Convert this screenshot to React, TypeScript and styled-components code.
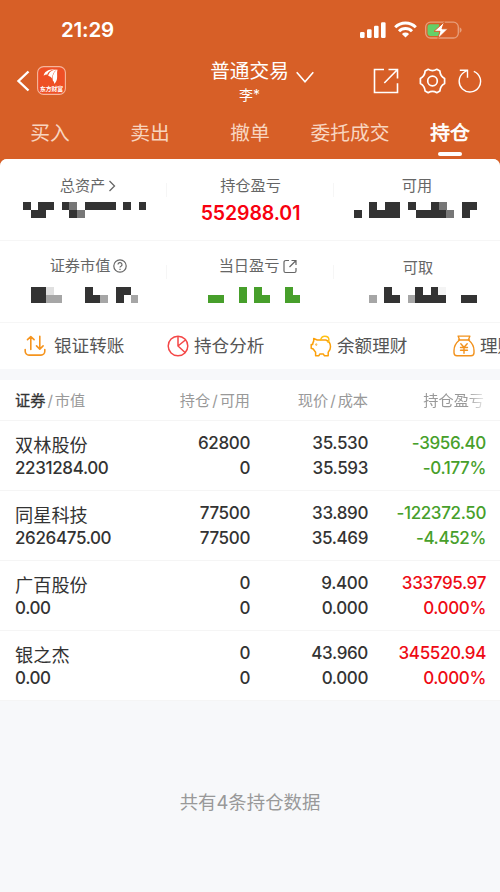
import React from "react";
import styled, { createGlobalStyle } from "styled-components";

const GlobalStyle = createGlobalStyle`
  * { box-sizing: border-box; }
  body { margin: 0; background: #f7f8fa; }
`;

const CELL = 7.7;
const INK: Record<string, string> = {
  "#": "#333333",
  m: "#777777",
  g: "#a6a6a6",
  l: "#e0e0e0",
  f: "#f4f4f4",
  G: "#479f2b",
};

const Screen = styled.div`
  width: 500px;
  height: 892px;
  overflow: hidden;
  display: flex;
  flex-direction: column;
  background: #d75f27;
  color: #333;
  font-family: Inter, "Noto Sans CJK SC", sans-serif;
`;

const StatusBar = styled.div`
  height: 56px;
  display: flex;
  justify-content: space-between;
  padding: 16px 38px 0 61px;
  color: #fff;
`;

const Clock = styled.span`
  font-size: 20.5px;
  line-height: 28px;
  font-weight: 600;
  letter-spacing: -0.2px;
`;

const StatusIcons = styled.div`
  display: flex;
  align-items: center;
  height: 27px;
  gap: 8px;
`;

const NavBar = styled.div`
  height: 52px;
  display: grid;
  grid-template-columns: 200px 120px 180px;
  color: #fff;
`;

const NavLeft = styled.div`
  display: flex;
  align-items: center;
  height: 49px;
  padding-left: 16px;
  gap: 7px;
`;

const NavTitle = styled.div`
  display: flex;
  padding: 2px 0 0 10px;
  gap: 7px;
`;

const TitleText = styled.div`
  width: 79px;
  text-align: center;
  white-space: nowrap;
`;

const Account = styled.div`
  font-size: 19.7px;
  line-height: 27px;
`;

const Owner = styled.div`
  font-size: 14px;
  line-height: 20px;
`;

const Chevron = styled.svg`
  margin-top: 13px;
`;

const NavRight = styled.div`
  display: flex;
  align-items: center;
  height: 49px;
  padding-left: 53px;
`;

const ToolIcon = styled.svg<{ $gap?: number }>`
  margin-left: ${(p) => p.$gap ?? 0}px;
  flex: none;
`;

const Tabs = styled.div`
  height: 51px;
  display: grid;
  grid-template-columns: repeat(5, 1fr);
`;

const Tab = styled.div<{ $active?: boolean }>`
  display: flex;
  flex-direction: column;
  align-items: center;
  justify-content: space-between;
  padding: 11px 0 3px;
  font-size: 19.8px;
  line-height: 29px;
  color: ${(p) => (p.$active ? "#fff" : "#f8d5c0")};
  -webkit-text-stroke: ${(p) => (p.$active ? "0.7px #fff" : "0")};
`;

const TabMark = styled.span`
  width: 24px;
  height: 4px;
  border-radius: 2px;
  background: #fff;
`;

const Sheet = styled.div`
  flex: 1;
  border-radius: 7px 7px 0 0;
  background: #f7f8fa;
  overflow: hidden;
`;

const Summary = styled.div`
  background: #fff;
  display: grid;
  grid-template-columns: 167px 167px 166px;
  grid-template-rows: 82px 82px;
`;

const Metric = styled.div<{ $top?: number }>`
  display: flex;
  flex-direction: column;
  border-bottom: 1px solid #f6f6f6;
  padding-top: ${(p) => p.$top ?? 16}px;
  background: linear-gradient(#f6f6f6, #f6f6f6) right 24px / 1px 14px no-repeat;

  &:nth-child(3n) {
    background: none;
  }
`;

const MetricLabel = styled.div<{ $shift?: number }>`
  display: flex;
  justify-content: center;
  align-items: center;
  gap: 3px;
  font-size: 15.2px;
  line-height: 22px;
  height: 22px;
  color: #666;
  padding-left: ${(p) => p.$shift ?? 0}px;
`;

const MetricValue = styled.div`
  text-align: center;
  font-size: 19.5px;
  line-height: 24px;
  margin-top: 4px;
  font-weight: 600;
  letter-spacing: -0.1px;
  color: #f8000f;
`;

const MosaicArt = styled.svg<{ $left: number; $top: number }>`
  margin: ${(p) => p.$top}px 0 0 ${(p) => p.$left}px;
  flex: none;
`;

const Actions = styled.div`
  height: 46px;
  background: #fff;
  display: flex;
  overflow: hidden;
  padding-left: 24px;
`;

const Action = styled.div<{ $gap: number }>`
  flex: none;
  width: 143px;
  display: flex;
  align-items: center;
  gap: ${(p) => p.$gap}px;
  font-size: 17.6px;
  line-height: 26px;
  color: #555;
  white-space: nowrap;
`;

const Table = styled.div`
  margin-top: 11px;
`;

const Row = styled.div`
  height: 70px;
  padding: 10px 14px 0 15px;
  display: grid;
  grid-template-columns: 117px 118px 118px 118px;
  justify-content: start;
  background: #fff;
  border-bottom: 1px solid #f5f5f5;
`;

const HeadRow = styled(Row)`
  height: 41px;
  padding-top: 9px;
  font-size: 15.2px;
  line-height: 24px;
  color: #999;
`;

const HeadCell = styled.div<{ $right?: boolean; $fade?: boolean }>`
  text-align: ${(p) => (p.$right ? "right" : "left")};
  white-space: nowrap;
  padding-right: ${(p) => (p.$fade ? 2 : 0)}px;
  ${(p) => p.$fade && "-webkit-mask-image: linear-gradient(90deg, #000 84%, rgba(0,0,0,.15) 100%);"}
`;

const Strong = styled.span`
  color: #333;
  -webkit-text-stroke: 0.3px #333;
`;

const Slash = styled.span`
  margin: 0 2px;
`;

const Cell = styled.div<{ $tone?: "up" | "down"; $left?: boolean }>`
  text-align: ${(p) => (p.$left ? "left" : "right")};
  font-size: 17px;
  line-height: 24.5px;
  font-weight: 500;
  letter-spacing: -0.36px;
  white-space: nowrap;
  color: ${(p) => (p.$tone === "up" ? "#ee0a14" : p.$tone === "down" ? "#479f2b" : "#333")};
`;

const StockName = styled.div`
  font-size: 18.2px;
  font-weight: 400;
  letter-spacing: 0;
  height: 24.5px;
  line-height: 28px;
`;

const Footnote = styled.div`
  text-align: center;
  padding-top: 87px;
  font-size: 18.4px;
  line-height: 28px;
  color: #999;
`;

function Mosaic({ rows, left, top }: { rows: string[]; left: number; top: number }) {
  return (
    <MosaicArt $left={left} $top={top} width={rows[0].length * CELL} height={16}>
      {rows.flatMap((row, y) =>
        [...row].map((c, x) =>
          INK[c] ? (
            <rect key={`${x}-${y}`} x={x * CELL} y={y * 8} width={CELL + 0.1} height={8} fill={INK[c]} shapeRendering="crispEdges" />
          ) : null
        )
      )}
    </MosaicArt>
  );
}

const Signal = () => (
  <svg width="26" height="16" viewBox="0 0 26 16" fill="#fff">
    <rect x="0" y="10" width="4.6" height="6" rx="1.2" />
    <rect x="7" y="7.3" width="4.6" height="8.7" rx="1.2" />
    <rect x="14" y="3.8" width="4.6" height="12.2" rx="1.2" />
    <rect x="21" y="0.3" width="4.6" height="15.7" rx="1.2" />
  </svg>
);

const Wifi = () => (
  <svg width="23" height="17" viewBox="0 0 23 17" fill="none" stroke="#fff" strokeWidth="3">
    <path d="M1.2 6.2a14.7 14.7 0 0 1 20.6 0" />
    <path d="M5 10.2a9.2 9.2 0 0 1 13 0" />
    <path d="M11.5 16.6 7.9 13a5.2 5.2 0 0 1 7.2 0z" fill="#fff" stroke="none" />
  </svg>
);

const Battery = () => (
  <svg width="37" height="18" viewBox="0 0 37 18">
    <rect x="0.7" y="1.2" width="32.6" height="15.8" rx="4.8" fill="none" stroke="#e79f7c" strokeWidth="1.3" />
    <path d="M34.7 6.3q2 1 2 2.8t-2 2.8z" fill="#e79f7c" />
    <path d="M5.3 3.2H14v11.7H5.3q-2.8 0-2.8-2.8V6q0-2.8 2.8-2.8z" fill="#65cf68" />
    <path d="M19.5.8 9 10.3h6l-2.2 7.4L23 7.8h-6z" fill="#fff" stroke="#d75f27" strokeWidth="1" />
  </svg>
);

const BrandLogo = () => (
  <svg width="29" height="29" viewBox="0 0 29 29">
    <rect x="0.6" y="0.6" width="27.8" height="27.8" rx="6" fill="#ee4f25" stroke="#f5b79d" strokeWidth="1.1" />
    <path d="M6.7 9.8C7 5.5 12 2.5 19.5 3.3 13 4.1 11 6 10.4 8.5 9 8.3 7.8 8.8 6.7 9.8z" fill="#fff" />
    <path d="M11.2 9.8C12 5.9 15.5 3.6 20 3.5c-3.5 2.4-4.6 5-4.8 9.2-1.1-1.7-2.4-2.5-4-2.9z" fill="#fff" />
    <path d="M15.8 14.5c-.5-4.9 1-8.8 4.7-10.9-.9 3.5 0 5.5-.5 9.2-.3 2-1.3 3.7-2.6 5.2-.1-1.5-.6-2.5-1.6-3.5z" fill="#fff" />
    <text x="14.5" y="24.7" textAnchor="middle" fontSize="5.8" fontWeight="700" fill="#fff" fontFamily="Noto Sans CJK SC">东方财富</text>
  </svg>
);

const TransferIcon = () => (
  <svg width="22" height="22" viewBox="0 0 22 22" fill="none" stroke="#f5941e" strokeWidth="1.6" strokeLinecap="round" strokeLinejoin="round">
    <path d="M1.2 14.5v1.8a3.8 3.8 0 0 0 3.8 3.8h12a3.8 3.8 0 0 0 3.8-3.8v-1.8" />
    <path d="M6.8 14.5V1.8M3.5 4.7l3.3-3.1 3.3 3.1M15.8 1.3V14M12.5 10.9l3.3 3.2 3.3-3.2" />
  </svg>
);

const PieIcon = () => (
  <svg width="22" height="22" viewBox="0 0 22 22" fill="none" stroke="#f44747" strokeWidth="1.5">
    <circle cx="11" cy="11" r="9.8" />
    <path d="M11 1.2V11l7.3 6.7M11 11l8-6.5" />
  </svg>
);

const PiggyIcon = () => (
  <svg width="22" height="22" viewBox="0 0 22 22" fill="none" stroke="#fba00b" strokeWidth="1.5" strokeLinejoin="round" strokeLinecap="round">
    <path d="M3.7 6V3.5L7.2 5h8.6c3 1 4.7 3.5 4.7 6.8 0 2.500-.8 4-2.300 5.500v3.400h-3.900l-.9-1.700H9.800l-.9 1.700H5.600v-3.500L3.200 14l-2-.8V9.600h1.400C2.800 8 3.100 7 3.700 6z" />
    <path d="M10.600 5c.6-2.500 2.200-3.800 4.200-3.800 2.500 0 4.100 1.700 4.100 3.600 0 1-.3 1.800-.8 2.500" stroke="#ffc014" />
    <circle cx="6.3" cy="9.6" r=".3" />
  </svg>
);

const MoneyBagIcon = () => (
  <svg width="22" height="22" viewBox="0 0 22 22" fill="none" stroke="#f2921d" strokeWidth="1.4" strokeLinejoin="round" strokeLinecap="round">
    <path d="M6.5 4.8 5.1 1.1h11.8l-1.4 3.7M5.5 5h11" />
    <path d="M6.5 5C2.8 8 1 11.5 1 15.5v2.3q0 3 3 3h14q3 0 3-3v-2.3C21 11.5 19.2 8 15.5 5" />
    <path d="M7.8 8.8 11 12.3l3.2-3.5M11 12.3v5.9M7.500 12.500h7M7.500 15.200h7" />
  </svg>
);

const holdings = [
  { name: "双林股份", value: "2231284.00", held: "62800", usable: "0", price: "35.530", cost: "35.593", gain: "-3956.40", rate: "-0.177%" },
  { name: "同星科技", value: "2626475.00", held: "77500", usable: "77500", price: "33.890", cost: "35.469", gain: "-122372.50", rate: "-4.452%" },
  { name: "广百股份", value: "0.00", held: "0", usable: "0", price: "9.400", cost: "0.000", gain: "333795.97", rate: "0.000%" },
  { name: "银之杰", value: "0.00", held: "0", usable: "0", price: "43.960", cost: "0.000", gain: "345520.94", rate: "0.000%" },
];

const tabs = ["买入", "卖出", "撤单", "委托成交", "持仓"];

export default function App() {
  return (
    <Screen>
      <GlobalStyle />
      <StatusBar>
        <Clock>21:29</Clock>
        <StatusIcons>
          <Signal />
          <Wifi />
          <Battery />
        </StatusIcons>
      </StatusBar>
      <NavBar>
        <NavLeft>
          <svg width="14" height="22" viewBox="0 0 14 22" fill="none" stroke="#fff" strokeWidth="2.4">
            <path d="M12.5 1.5 2.5 11l10 9.5" />
          </svg>
          <BrandLogo />
        </NavLeft>
        <NavTitle>
          <TitleText>
            <Account>普通交易</Account>
            <Owner>李*</Owner>
          </TitleText>
          <Chevron width="18" height="13" viewBox="0 0 18 13" fill="none" stroke="#fff" strokeWidth="1.6">
            <path d="m.7 1.3 8.3 9.5 8.3-9.5" />
          </Chevron>
        </NavTitle>
        <NavRight>
          <ToolIcon width="26" height="26" viewBox="0 0 26 26" fill="none" stroke="#fff" strokeWidth="1.6">
            <path d="M11 1.5H1.5v23h23v-9.3M15.5 1.5h9v9M24.5 1.5 11.3 15" />
          </ToolIcon>
          <ToolIcon $gap={20} width="27" height="26" viewBox="0 0 27 26" fill="none" stroke="#fff" strokeWidth="1.7" strokeLinejoin="round">
            <path d="M9.200 1.300Q13.500 4 17.800 1.300L20.900 3.100Q21.200 8 25.600 10.500V15.500Q21.200 18 20.900 22.900L17.800 24.700Q13.500 22 9.200 24.700L6.100 22.900Q5.800 18 1.400 15.500V10.500Q5.800 8 6.100 3.100Z" />
            <circle cx="13.5" cy="13" r="4.8" />
          </ToolIcon>
          <ToolIcon $gap={12} width="24" height="26" viewBox="0 0 24 26" fill="none" stroke="#fff" strokeWidth="1.4">
            <path d="M15.800 3.300A10.700 10.700 0 1 1 5.700 4.500L9.400 2.200M1.800 2.200h7.700v7.500" />
          </ToolIcon>
        </NavRight>
      </NavBar>
      <Tabs>
        {tabs.map((t) => (
          <Tab key={t} $active={t === "持仓"}>
            {t}
            {t === "持仓" && <TabMark />}
          </Tab>
        ))}
      </Tabs>
      <Sheet>
        <Summary>
          <Metric>
            <MetricLabel $shift={9}>
              总资产
              <svg width="8" height="12" viewBox="0 0 8 12" fill="none" stroke="#666" strokeWidth="1.3">
                <path d="m1.5 1 5 5-5 5" />
              </svg>
            </MetricLabel>
            <Mosaic left={23} top={5} rows={["#.##.#m.####.#.#", ".##...#m........"]} />
          </Metric>
          <Metric>
            <MetricLabel>持仓盈亏</MetricLabel>
            <MetricValue>552988.01</MetricValue>
          </Metric>
          <Metric>
            <MetricLabel>可用</MetricLabel>
            <Mosaic left={20} top={5} rows={["..#.##.#..#m..##", "#.####..####m.#."]} />
          </Metric>
          <Metric $top={14}>
            <MetricLabel $shift={10}>
              证券市值
              <svg width="14" height="14" viewBox="0 0 14 14" fill="none" stroke="#666" strokeWidth="1.2">
                <circle cx="7" cy="7" r="6.2" />
                <path d="M5 5.6a2 2 0 1 1 3 1.7q-1 .5-1 1.3M7 9.7v1.2" />
              </svg>
            </MetricLabel>
            <Mosaic left={30.7} top={10} rows={["##l....#...##.", "##gg...##g.#.g"]} />
          </Metric>
          <Metric $top={14}>
            <MetricLabel $shift={16}>
              当日盈亏
              <svg width="16" height="15" viewBox="0 0 16 15" fill="none" stroke="#666" strokeWidth="1.2">
                <path d="M7 1.5H4q-2 0-2 2V12q0 1.5 1.5 1.5h9Q14 13.5 14 12V9M9.5 1.5H14V6M14 1.5 7.5 8" />
              </svg>
            </MetricLabel>
            <Mosaic left={40.6} top={10} rows={["....G.G...G.", "GG..G.GG..GG"]} />
          </Metric>
          <Metric $top={16}>
            <MetricLabel $shift={2}>可取</MetricLabel>
            <Mosaic left={35.3} top={8} rows={["..#...#.#f....", "g.##.g####..##"]} />
          </Metric>
        </Summary>
        <Actions>
          <Action $gap={8}><TransferIcon />银证转账</Action>
          <Action $gap={5}><PieIcon />持仓分析</Action>
          <Action $gap={5}><PiggyIcon />余额理财</Action>
          <Action $gap={5}><MoneyBagIcon />理财</Action>
        </Actions>
        <Table>
          <HeadRow>
            <HeadCell><Strong>证券</Strong><Slash>/</Slash>市值</HeadCell>
            <HeadCell $right>持仓<Slash>/</Slash>可用</HeadCell>
            <HeadCell $right>现价<Slash>/</Slash>成本</HeadCell>
            <HeadCell $right $fade>持仓盈亏</HeadCell>
          </HeadRow>
          {holdings.map((h) => {
            const tone = h.gain.startsWith("-") ? "down" : "up";
            return (
              <Row key={h.name}>
                <Cell $left><StockName>{h.name}</StockName>{h.value}</Cell>
                <Cell>{h.held}<br />{h.usable}</Cell>
                <Cell>{h.price}<br />{h.cost}</Cell>
                <Cell $tone={tone}>{h.gain}<br />{h.rate}</Cell>
              </Row>
            );
          })}
        </Table>
        <Footnote>共有4条持仓数据</Footnote>
      </Sheet>
    </Screen>
  );
}
